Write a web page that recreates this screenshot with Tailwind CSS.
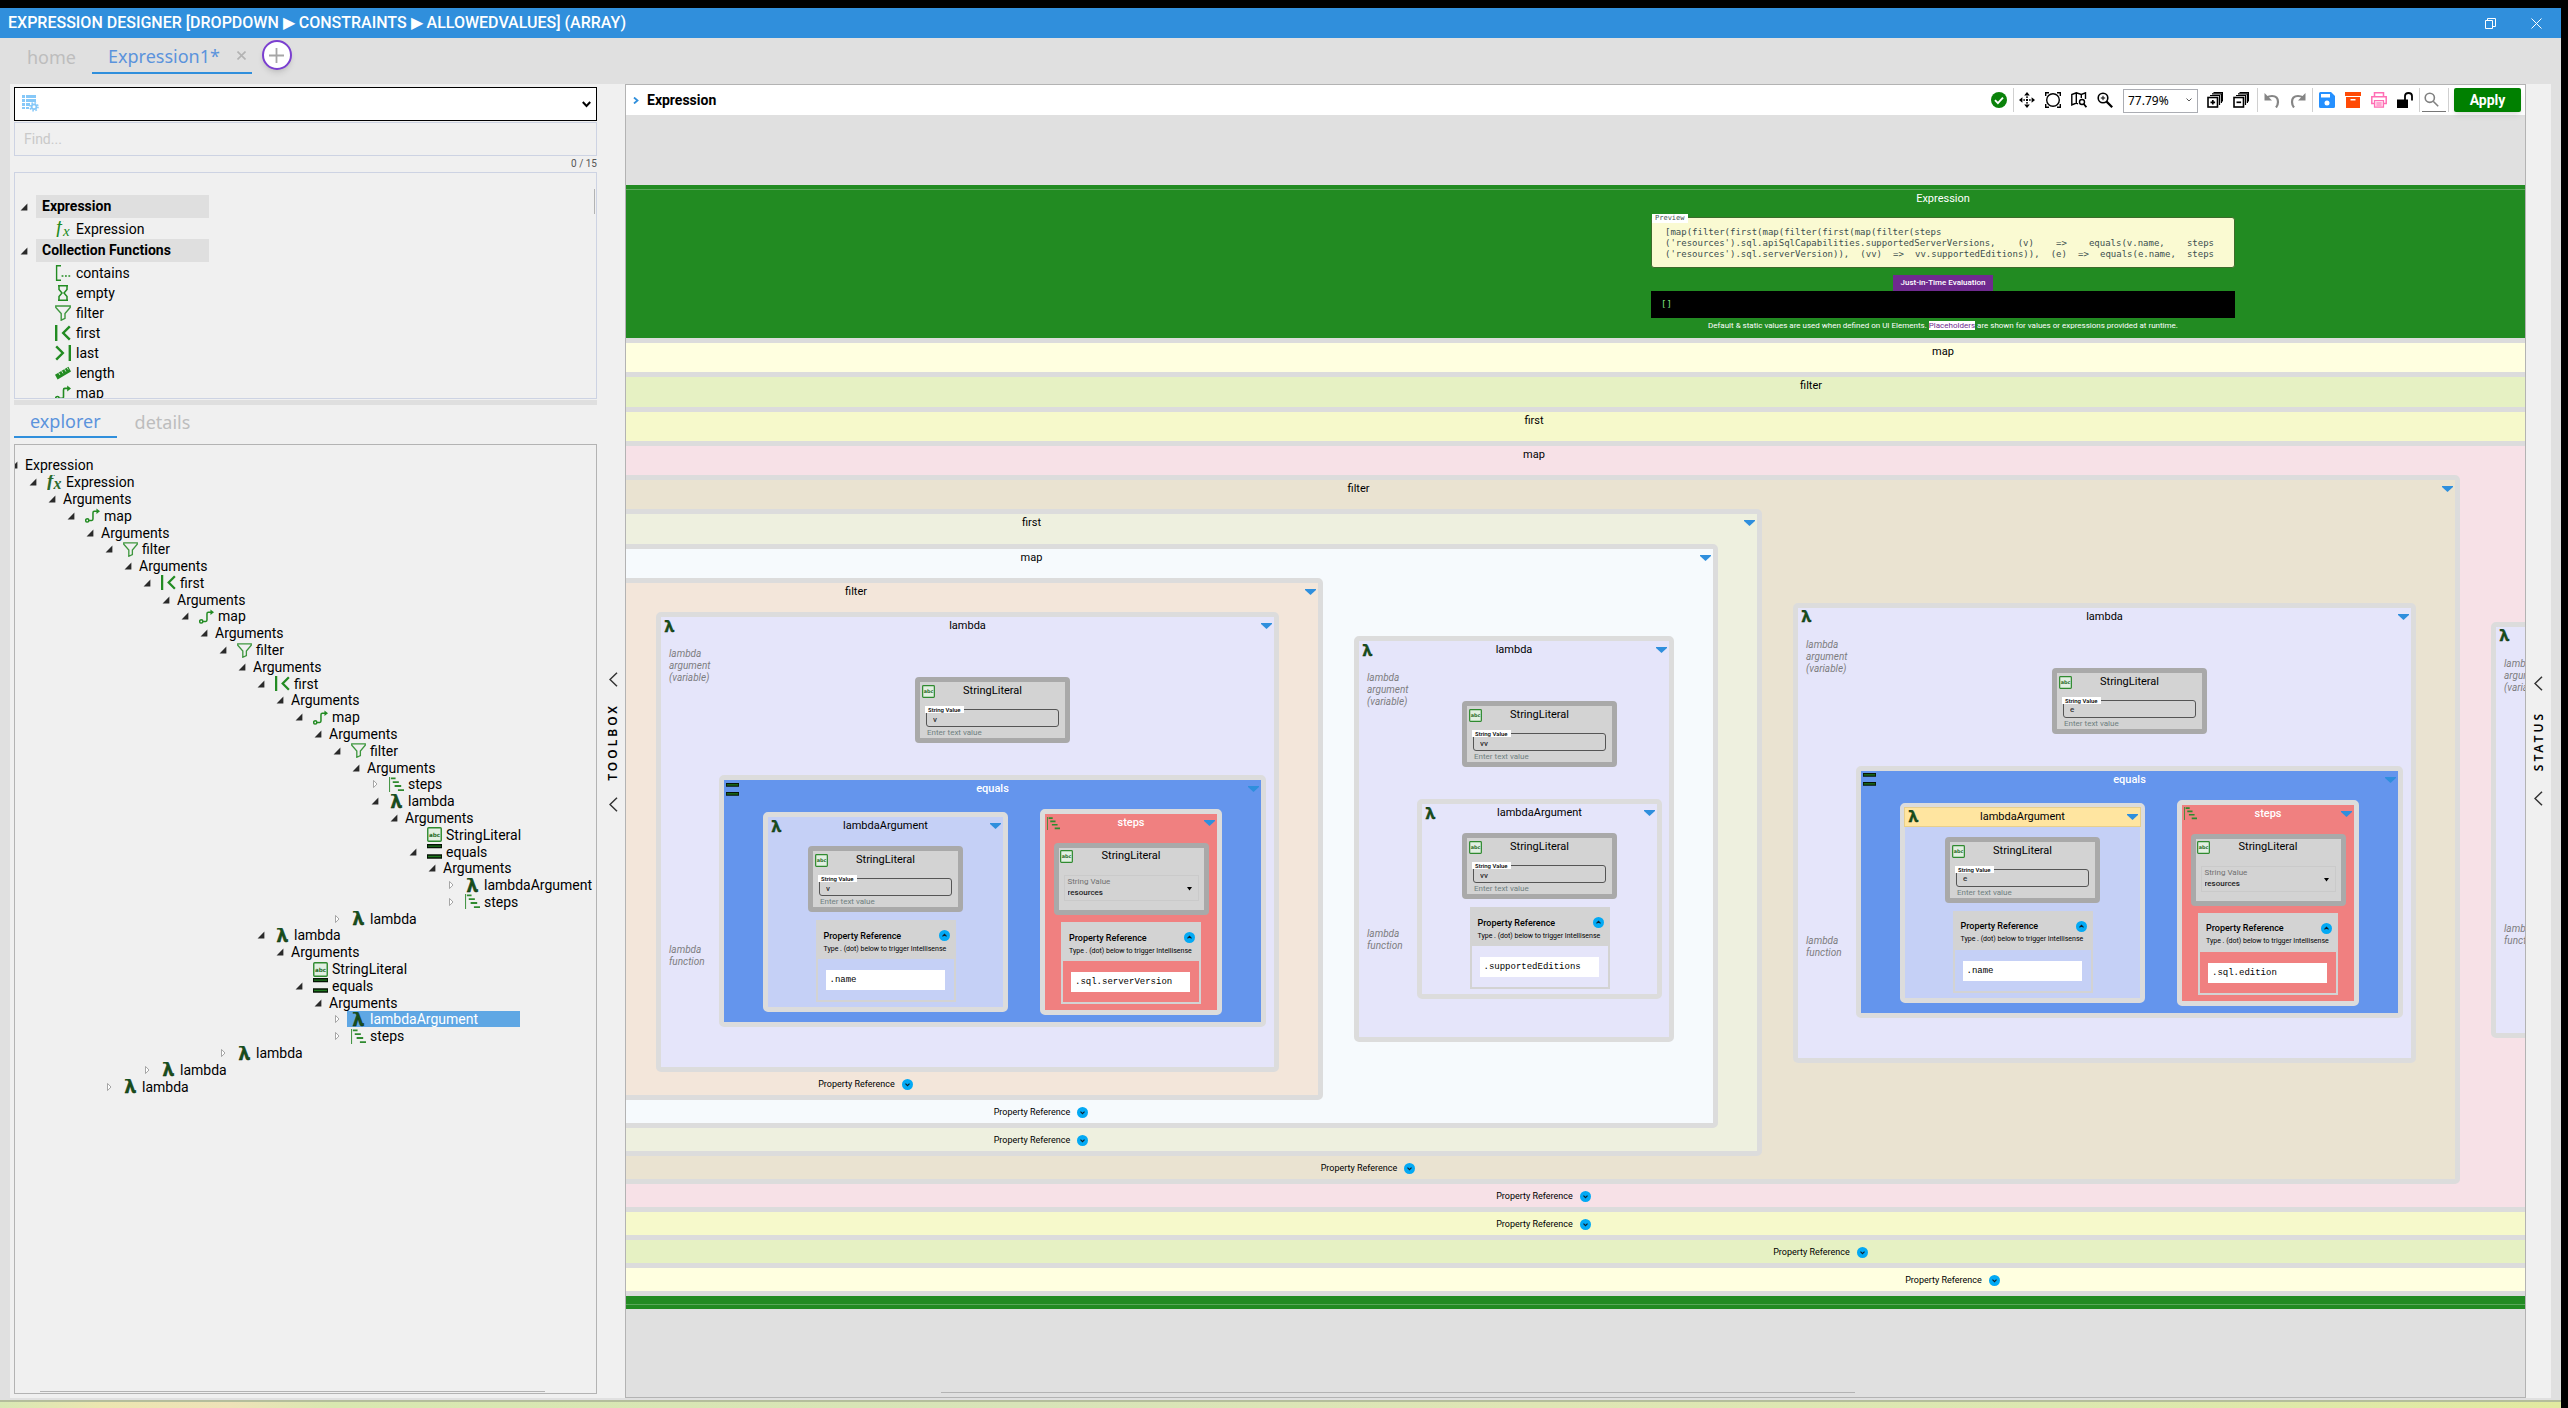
<!DOCTYPE html>
<html lang="en">
<head>
    <meta charset="UTF-8">
    <meta name="viewport" content="width=device-width, initial-scale=1.0">
    <title>Expression Designer</title>
    <script src="https://cdn.jsdelivr.net/npm/@tailwindcss/browser@4"></script>
</head>
<body class="h-screen overflow-hidden bg-black pt-2 pr-[7px] font-['Roboto',sans-serif] text-black">

    <!-- Icon sprite -->
    <svg class="hidden">
        <symbol id="i-lambda" viewBox="0 0 16 16"><text x="8" y="15" text-anchor="middle" font-family="Noto Sans" font-weight="bold" font-size="20" fill="#17521b" stroke="#0c260e" stroke-width=".5">λ</text></symbol>
        <symbol id="i-fx" viewBox="0 0 16 16"><text x="0" y="13" font-family="Liberation Serif" font-style="italic" font-weight="bold" font-size="20" fill="#2b6a2b">f</text><text x="7" y="15" font-family="Liberation Serif" font-style="italic" font-weight="bold" font-size="17" fill="#2b6a2b">x</text></symbol>
        <symbol id="i-fx-thin" viewBox="0 0 16 16"><text x="1" y="13" font-family="Liberation Serif" font-style="italic" font-size="20" fill="#228b22">f</text><text x="8" y="15" font-family="Liberation Serif" font-style="italic" font-size="15" fill="#228b22">x</text></symbol>
        <symbol id="i-map" viewBox="0 0 16 16" fill="none" stroke="#228b22" stroke-width="1.6"><circle cx="2.4" cy="13.2" r="1.7"/><path d="M4 13.2h3.2q1.3 0 1.3-1.4V5q0-1.6 1.4-1.6H13"/><path d="M12.2 .4 16 3.4 12.2 6.4z" fill="#228b22" stroke="none"/></symbol>
        <symbol id="i-filter" viewBox="0 0 16 16" fill="none" stroke="#3d963d" stroke-width="1.4"><path d="M.8 1h14.4v1.4L10 8.6v4.8L6.2 15.2V8.6L.8 2.4z"/></symbol>
        <symbol id="i-first" viewBox="0 0 16 16" fill="none" stroke="#228b22" stroke-width="2.4"><path d="M1.2 0v16M14.8 1.400 8.200 8l6.600 6.600"/></symbol>
        <symbol id="i-last" viewBox="0 0 16 16" fill="none" stroke="#228b22" stroke-width="2.4"><path d="M14.8 0v16M1.200 1.400 7.800 8l-6.600 6.600"/></symbol>
        <symbol id="i-steps" viewBox="0 0 16 16" fill="none" stroke="#2f8a2f"><path d="M.6 0v16" stroke-width="1"/><path d="M2 1.4h5M4 5.4h6.5M6 9.6h7M9.500 14h6.500" stroke-width="2"/></symbol>
        <symbol id="i-equals" viewBox="0 0 16 16"><path d="M0 0h16v4.600H0zM0 11h16v4.600H0z" fill="#071407"/><path d="M1 1.500h14v1.500H1zM1 12.500h14V14H1z" fill="#1f7a1f"/></symbol>
        <symbol id="i-abc" viewBox="0 0 16 16"><rect x=".8" y=".8" width="14.4" height="14.4" rx="1" fill="#e2efe2" stroke="#2f8a2f" stroke-width="1.5"/><text x="8" y="10.4" text-anchor="middle" font-family="DejaVu Sans" font-weight="bold" font-size="6" fill="#1f6a1f">abc</text></symbol>
        <symbol id="i-contains" viewBox="0 0 16 16" fill="none" stroke="#228b22"><path d="M6 .8H1.600v14.400H6" stroke-width="1.4"/><path d="M6.600 11h1.800M10 11h1.800M13.400 11h1.800" stroke-width="1.4"/></symbol>
        <symbol id="i-empty" viewBox="0 0 16 16" fill="none" stroke="#228b22" stroke-width="1.5"><path d="M3 .8h10M3 15.2h10M4 1v3.400L7 8l-3 3.600V15M12 1v3.400L9 8l3 3.600V15"/></symbol>
        <symbol id="i-length" viewBox="0 0 16 16"><path d="M0 9.800 13.400 1.800 16 6.600 2.600 14.400z" fill="#228b22"/><path d="m3.600 7.600 1.300 2.400M6.600 5.900l1.300 2.400M9.600 4.200l1.300 2.400M12.200 2.800l1 1.800" stroke="#f0f0f0" stroke-width=".8"/></symbol>
        <symbol id="i-open" viewBox="0 0 10 10"><path d="M8.400 1.600v6.800H1.600z" fill="#2a2a2a"/></symbol>
        <symbol id="i-closed" viewBox="0 0 10 10"><path d="M3.500 1.400 7 5 3.500 8.600z" fill="#fff" stroke="#a6a6a6"/></symbol>
        <symbol id="i-tri" viewBox="0 0 11 6"><path d="M0 0h11v1L5.500 6 0 1z" fill="#2f8fdd"/></symbol>
        <symbol id="i-chev-down" viewBox="0 0 12 12"><circle cx="6" cy="6" r="6" fill="#03a9f4"/><path d="m3.800 5 2.200 2.200L8.200 5" fill="none" stroke="#10202c" stroke-width="1.3"/></symbol>
        <symbol id="i-chev-up" viewBox="0 0 12 12"><circle cx="6" cy="6" r="6" fill="#03a9f4"/><path d="M3.800 7 6 4.800 8.200 7" fill="none" stroke="#10202c" stroke-width="1.3"/></symbol>
    </svg>

    <div class="flex h-full flex-col bg-[#e0e0e0]">
        <!-- Title bar -->
        <header class="flex h-[30px] shrink-0 items-center bg-[#308fdc] pr-0.5 pl-2 text-white">
            <h1 class="flex-1 text-base leading-5 font-medium">EXPRESSION DESIGNER [DROPDOWN ▶ CONSTRAINTS ▶ ALLOWEDVALUES] (ARRAY)</h1>
            <button class="grid w-[46px] place-items-center" aria-label="Restore"><svg class="size-[11px]" viewBox="0 0 11 11" fill="none" stroke="#fff"><path d="M.5 2.500h7v8h-7zM2.500 2.500v-2h8v8h-3"/></svg></button>
            <button class="grid w-[46px] place-items-center" aria-label="Close"><svg class="size-[11px]" viewBox="0 0 11 11" fill="none" stroke="#fff"><path d="m.5.5 10 10M10.500.5l-10 10"/></svg></button>
        </header>

        <!-- Document tabs -->
        <nav class="flex h-[46px] shrink-0 items-start pl-[11px] font-['Noto_Sans',sans-serif] text-lg">
            <button class="h-9 px-4 pt-0.5 text-[#bdbdbd]">home</button>
            <div class="flex h-9 items-center border-b-2 border-[#308fdc] pr-[5px] pl-4 text-[#5b93dc]">
                <button class="pt-0.5">Expression1*</button>
                <button class="ml-4 grid size-[11px] place-items-center" aria-label="Close tab"><svg class="size-[9px]" viewBox="0 0 9 9" stroke="#b3b3b3" stroke-width="1.600"><path d="m.5.5 8 8M8.500.5l-8 8"/></svg></button>
            </div>
            <button class="mt-0.5 ml-[10px] grid size-[30px] place-items-center rounded-full border-2 border-[#7b3fd0] bg-white shadow-md" aria-label="New tab"><svg class="size-[15px]" viewBox="0 0 15 15" stroke="#a6a6a6" stroke-width="1.800"><path d="M7.500 0v15M0 7.500h15"/></svg></button>
        </nav>

        <main class="mb-[2px] flex min-h-0 flex-1 px-[10px]">
            <!-- Toolbox -->
            <aside class="flex w-[615px] shrink-0 bg-[#f0f0f0] pl-1">
                <div class="flex w-[583px] flex-col pt-[3px] pb-1">
                    <div class="relative">
                        <select class="block h-[34px] w-full appearance-none border border-black bg-white" aria-label="Toolbox filter"><option></option></select>
                        <svg class="pointer-events-none absolute top-2 left-2 size-[17px]" viewBox="0 0 17 17"><path d="M0 0h3v3H0zM4 0h10v3H4zM0 4h3v3H0zM4 4h10v3H4zM0 8h3v3H0zM4 8h4v3H4zM0 12h3v2H0zM4 12h3v2H4z" fill="#86c8f8"/><circle cx="12" cy="11.800" r="2.400" fill="#fff" stroke="#86c8f8" stroke-width="1.800"/><circle cx="12" cy="11.800" r="4" fill="none" stroke="#86c8f8" stroke-width="1.600" stroke-dasharray="1.570 1.570"/></svg>
                        <svg class="pointer-events-none absolute top-3.5 right-1.5 h-[7px] w-[9px]" viewBox="0 0 9 7" fill="none" stroke="#000" stroke-width="2"><path d="m.8 1 3.700 4 3.700-4"/></svg>
                    </div>
                    <input type="text" placeholder="Find..." aria-label="Find" class="mt-px h-[34px] border border-[#cdd3e3] px-[9px] text-sm placeholder:text-[#c9c9c9]">
                    <p class="h-4 text-right text-[10px] leading-4 text-[#555]">0 / 15</p>
                    <div class="relative h-[227px] shrink-0 overflow-hidden border border-[#cdd3e3] pt-[22px] text-sm leading-5" id="toolbox"></div>
                    <div class="mt-px h-[5px] shrink-0 bg-[#dfdfdf]"></div>
                    <div class="flex h-[33px] shrink-0 gap-0.5 font-['Noto_Sans',sans-serif] text-lg leading-8">
                        <button class="border-b-2 border-[#308fdc] px-4 text-[#5b93dc]">explorer</button>
                        <button class="px-4 text-[#bdbdbd]">details</button>
                    </div>
                    <div class="relative mt-1.5 flex-1 overflow-hidden border border-[#b3b3b3] pt-3">
                        <ul class="grid h-[638px] auto-rows-fr text-sm leading-4" id="tree"></ul>
                        <div class="absolute bottom-px left-[25px] h-px w-[505px] bg-[#b3b3b3]"></div>
                    </div>
                </div>
                <div class="flex flex-1 flex-col items-center justify-center gap-4 pt-0.5 pl-1">
                    <svg class="h-[15px] w-[9px]" viewBox="0 0 9 15" fill="none" stroke="#333" stroke-width="1.500"><path d="M8 .8 1 7.500 8 14.200"/></svg>
                    <button class="rotate-180 font-['Noto_Sans',sans-serif] text-xs font-semibold tracking-[3px] [writing-mode:vertical-rl]">TOOLBOX</button>
                    <svg class="h-[15px] w-[9px]" viewBox="0 0 9 15" fill="none" stroke="#333" stroke-width="1.500"><path d="M8 .8 1 7.500 8 14.200"/></svg>
                </div>
            </aside>

            <!-- Design surface -->
            <section class="flex min-w-0 flex-1 flex-col border border-[#b3b3b3]">
                <div class="flex h-[30px] shrink-0 items-center bg-white pr-1">
                    <button class="flex flex-1 items-center gap-2 pl-[7px] text-left text-sm font-bold"><svg class="h-[7px] w-[6px]" viewBox="0 0 6 7" fill="none" stroke="#308fdc" stroke-width="1.800"><path d="m1 .5 3.500 3L1 6.500"/></svg>Expression</button>

                    <svg class="mr-1.5 size-4" viewBox="0 0 16 16"><circle cx="8" cy="8" r="8" fill="#0a820a"/><path d="m4 8.200 2.900 2.900L12 5.600" fill="none" stroke="#fff" stroke-width="1.900"/></svg>
                    <span class="h-6 w-px bg-[#d0d0d0]"></span>
                    <div class="flex gap-[10px] pr-2.5 pl-[5px]">
                        <button aria-label="Pan"><svg class="size-4" viewBox="0 0 16 16"><path d="m8 0 2.800 3.400H5.200zM8 16l2.800-3.400H5.200zM0 8l3.400-2.800v5.600zM16 8l-3.400-2.800v5.600z"/><path d="M7 7h2v2H7zM7 4.500h2v1.200H7zM7 10.300h2v1.200H7zM4.500 7h1.200v2H4.500zM10.300 7h1.200v2h-1.200z"/></svg></button>
                        <button aria-label="Fit"><svg class="size-4" viewBox="0 0 16 16" fill="none" stroke="#000" stroke-width="1.400"><circle cx="8" cy="8" r="6.300"/><path d="M.7 4V.7H4M12 .7h3.300V4M15.300 12v3.300H12M4 15.300H.7V12"/></svg></button>
                        <button aria-label="Overview"><svg class="size-4" viewBox="0 0 16 16" fill="none" stroke="#000" stroke-width="1.400"><path d="M7 11.800 5.300 11 .8 13V2.500L5.300.8l5 1.600L14.500.8V7M5.300.8V11M10.300 2.400V6"/><circle cx="11" cy="10" r="2.500"/><path d="m12.800 12 2.600 3.200" stroke-width="1.800"/></svg></button>
                        <button aria-label="Zoom"><svg class="size-4" viewBox="0 0 16 16" fill="none" stroke="#000" stroke-width="1.600"><circle cx="6" cy="6" r="4.800"/><path d="m9.600 9.600 5.600 5.600" stroke-width="2.200"/><path d="M6 3.800v4.400M3.800 6h4.400" stroke-width="1"/></svg></button>
                    </div>
                    <div class="relative mr-[9px]">
                        <select class="h-6 w-[75px] appearance-none border border-[#abadb3] pl-1 font-['Noto_Sans',sans-serif] text-xs" aria-label="Zoom level"><option>77.79%</option></select>
                        <svg class="pointer-events-none absolute top-2.5 right-1.5 h-1 w-1.5" viewBox="0 0 6 4" fill="none" stroke="#555"><path d="m.5.5 2.500 2.500L5.500.5"/></svg>
                    </div>
                    <div class="flex gap-[10px] pr-2">
                        <button aria-label="Expand all"><svg class="size-4" viewBox="0 0 16 16" fill="none" stroke="#000"><rect x="1" y="5.500" width="9.500" height="9.500" stroke-width="1.600"/><path d="M3 3.500h9.500V13M5 1.800h9.400V11M6.500.5H15.500V9.500" stroke-width="1.200"/><path d="M5.800 8v4.600M3.500 10.300h4.600" stroke-width="1.700"/></svg></button>
                        <button aria-label="Collapse all"><svg class="size-4" viewBox="0 0 16 16" fill="none" stroke="#000"><rect x="1" y="5.500" width="9.500" height="9.500" stroke-width="1.600"/><path d="M3 3.500h9.500V13M5 1.800h9.400V11M6.500.5H15.500V9.500" stroke-width="1.200"/><path d="M3.500 10.300h4.600" stroke-width="1.700"/></svg></button>
                    </div>
                    <span class="h-6 w-px bg-[#d0d0d0]"></span>
                    <div class="flex gap-[10px] px-1.5">
                        <button aria-label="Undo"><svg class="size-4" viewBox="0 0 16 16" fill="none" stroke="#858585" stroke-width="2.200"><path d="M3 5.500q2-1.500 5-1.500 6 0 6 6 0 3-2 5.500"/><path d="M.5 1v7.500H8z" fill="#858585" stroke="none"/></svg></button>
                        <button aria-label="Redo"><svg class="size-4" viewBox="0 0 16 16" fill="none" stroke="#858585" stroke-width="2.200"><path d="M13 5.500Q11 4 8 4q-6 0-6 6 0 3 2 5.500"/><path d="M15.500 1v7.500H8z" fill="#858585" stroke="none"/></svg></button>
                    </div>
                    <span class="h-6 w-px bg-[#d0d0d0]"></span>
                    <div class="flex gap-[10px] px-1.5">
                        <button aria-label="Save"><svg class="size-4" viewBox="0 0 16 16"><path d="M1.500 0H12l4 4v10.500a1.500 1.500 0 0 1-1.500 1.500h-13A1.500 1.500 0 0 1 0 14.500v-13A1.500 1.500 0 0 1 1.500 0z" fill="#2590ff"/><path d="M2 2h9v3.500H2z" fill="#fff"/><circle cx="8" cy="11" r="2.500" fill="#fff"/></svg></button>
                        <button aria-label="Archive"><svg class="size-4" viewBox="0 0 16 16" fill="#ff4a05"><path d="M0 0h16v4H0zM1 5h14v11H1z"/><path d="M5.500 7h5v1.500h-5z" fill="#fff"/></svg></button>
                        <button aria-label="Print"><svg class="size-4" viewBox="0 0 16 16" fill="none" stroke="#ff6eb4" stroke-width="1.500"><path d="M3.500 4.500V.8h9v3.700M3.500 11.500H.8V4.800h14.400v6.700h-2.700"/><path d="M3.500 8.500h9v6.700h-9zM5.500 11h5M5.500 13h5" fill="#ffd7ea" stroke-width="1.200"/></svg></button>
                        <button aria-label="Unlock"><svg class="size-4" viewBox="0 0 16 16"><path d="M0 7.500h11V16H0z"/><path d="M8 8V4q0-3 3.500-3T15 4v4.500" fill="none" stroke="#000" stroke-width="1.800"/></svg></button>
                    </div>
                    <span class="h-6 w-px bg-[#d0d0d0]"></span>
                    <button class="mx-0.5 h-6 w-6 border-b border-[#777] pl-0.5" aria-label="Search"><svg class="size-[15px]" viewBox="0 0 15 15" fill="none" stroke="#808080" stroke-width="1.600"><circle cx="5.800" cy="5.800" r="4.600"/><path d="m9.200 9.200 5 5"/></svg></button>
                    <span class="mr-[5px] h-6 w-px bg-[#d0d0d0]"></span>
                    <button class="h-6 w-[67px] rounded-[2px] bg-[#008000] text-sm font-bold text-white shadow-md">Apply</button>
                </div>

                <div class="relative min-h-0 flex-1 overflow-hidden pt-[70px]">
                    <div id="canvas" class="-ml-[589px] w-[3812px]"></div>
                    <div class="absolute bottom-1 left-[315px] h-px w-[914px] bg-[#b3b3b3]"></div>
                </div>
            </section>

            <!-- Status -->
            <aside class="flex w-[25px] shrink-0 flex-col items-center justify-center gap-5 bg-[#f0f0f0]">
                <svg class="h-[15px] w-[9px]" viewBox="0 0 9 15" fill="none" stroke="#333" stroke-width="1.500"><path d="M8 .8 1 7.500 8 14.200"/></svg>
                <button class="rotate-180 font-['Noto_Sans',sans-serif] text-xs font-semibold tracking-[3px] [writing-mode:vertical-rl]">STATUS</button>
                <svg class="h-[15px] w-[9px]" viewBox="0 0 9 15" fill="none" stroke="#333" stroke-width="1.500"><path d="M8 .8 1 7.500 8 14.200"/></svg>
            </aside>
        </main>

        <footer class="h-2 shrink-0 border-t-2 border-[#b4bd9c] bg-[linear-gradient(to_right,#d9e8b4,#ece6b0_4%,#eee2b8_9%,#d9e8b0_13%,#d8e4b8_40%,#dfe6b4_60%,#dce8b0_80%,#e2eaa0)]"></footer>
    </div>

    <script>
        const icon = (name, size) => `<svg class="${size} shrink-0 overflow-visible"><use href="#i-${name}"/></svg>`;

        // ---- Toolbox list ----
        const groups = [
            { name: 'Expression', items: [['fx-thin', 'Expression']] },
            { name: 'Collection Functions', items: [['contains', 'contains'], ['empty', 'empty'], ['filter', 'filter'], ['first', 'first'], ['last', 'last'], ['length', 'length'], ['map', 'map']] }
        ];
        document.getElementById('toolbox').innerHTML = groups.map(g => `
            <div class="flex items-center gap-[7px] pl-1">
                ${icon('open', 'size-[10px]')}
                <h3 class="h-[23px] w-[173px] bg-[#dfdfdf] pl-1.5 leading-[23px] font-bold">${g.name}</h3>
            </div>
            <ul class="pt-px">
                ${g.items.map(([ic, name]) => `<li class="flex h-5 items-center gap-[5px] pl-10">${icon(ic, 'size-4')}${name}</li>`).join('')}
            </ul>`).join('') + '<div class="absolute top-4 right-px h-[25px] w-px bg-[#b3b3b3]"></div>';

        // ---- Explorer tree: [depth, icon, label, state] ----
        const rows = [
            [0, '', 'Expression', 'open'], [1, 'fx', 'Expression', 'open'], [2, '', 'Arguments', 'open'],
            [3, 'map', 'map', 'open'], [4, '', 'Arguments', 'open'], [5, 'filter', 'filter', 'open'],
            [6, '', 'Arguments', 'open'], [7, 'first', 'first', 'open'], [8, '', 'Arguments', 'open'],
            [9, 'map', 'map', 'open'], [10, '', 'Arguments', 'open'], [11, 'filter', 'filter', 'open'],
            [12, '', 'Arguments', 'open'], [13, 'first', 'first', 'open'], [14, '', 'Arguments', 'open'],
            [15, 'map', 'map', 'open'], [16, '', 'Arguments', 'open'], [17, 'filter', 'filter', 'open'],
            [18, '', 'Arguments', 'open'], [19, 'steps', 'steps', 'closed'], [19, 'lambda', 'lambda', 'open'],
            [20, '', 'Arguments', 'open'], [21, 'abc', 'StringLiteral', ''], [21, 'equals', 'equals', 'open'],
            [22, '', 'Arguments', 'open'], [23, 'lambda', 'lambdaArgument', 'closed'], [23, 'steps', 'steps', 'closed'],
            [17, 'lambda', 'lambda', 'closed'], [13, 'lambda', 'lambda', 'open'], [14, '', 'Arguments', 'open'],
            [15, 'abc', 'StringLiteral', ''], [15, 'equals', 'equals', 'open'], [16, '', 'Arguments', 'open'],
            [17, 'lambda', 'lambdaArgument', 'closed', true], [17, 'steps', 'steps', 'closed'],
            [11, 'lambda', 'lambda', 'closed'], [7, 'lambda', 'lambda', 'closed'], [5, 'lambda', 'lambda', 'closed']
        ];
        document.getElementById('tree').innerHTML = rows.map(([depth, ic, label, state, selected]) => `
            <li class="flex items-center gap-[5px]" style="margin-left:${depth * 19 - 6}px">
                ${state ? icon(state, 'size-[10px]') : '<span class="w-[10px]"></span>'}
                <span class="flex items-center gap-1 ${ic ? 'pl-1' : 'pl-px'} ${selected ? 'w-[173px] bg-[#5fa7e4] text-white' : ''}">${ic ? icon(ic, 'size-[15px]') : ''}${label}</span>
            </li>`).join('');

        // ---- Diagram ----
        const toggle = '<button class="grid place-items-center" aria-label="Menu"><svg class="h-1.5 w-[11px]"><use href="#i-tri"/></svg></button>';

        function header(title, ic, extra) {
            return `
                <div class="grid shrink-0 grid-cols-[16px_1fr_16px] items-start text-center text-[11px] leading-[18px] ${extra}">
                    <span class="grid h-[18px] place-items-center">${ic ? icon(ic, 'size-[13px]') : ''}</span>
                    <span>${title}</span>
                    <span class="grid h-[18px] place-items-center">${toggle}</span>
                </div>`;
        }

        // Nested function frame: header, children side by side, collapsed property reference
        function frame(title, color, head, content) {
            return `
                <div class="flex flex-col rounded-[5px] border-[5px] border-[#dcdcdc] ${color}">
                    ${header(title, '', head)}
                    <div class="flex items-center gap-[31px] px-[39px]">${content}</div>
                    <div class="flex h-[23px] items-center justify-center gap-[7px] pt-0.5 pl-[19px] text-[9px]">Property Reference <button aria-label="Expand">${icon('chev-down', 'block size-[11px]')}</button></div>
                </div>`;
        }

        function stringLiteral(value) {
            return `
                <div class="h-[66px] w-[155px] shrink-0 rounded-[4px] border-[5px] border-[#a9a9a9] bg-[#d3d3d3] px-[6px]">
                    <div class="relative h-[27px] text-center text-[11px] leading-[18px]"><span class="absolute top-[3px] -left-1">${icon('abc', 'block size-[13px]')}</span>StringLiteral</div>
                    <div class="relative">
                        <label class="absolute -top-[3px] -left-px bg-white px-[3px] text-[6px] leading-[7px] font-medium">String Value</label>
                        <input type="text" value="${value}" aria-label="String Value" class="block h-[18px] w-full rounded-[3px] border border-[#555] px-1.5 pt-0.5 text-[8px] font-medium text-[#333]">
                    </div>
                    <p class="pl-px text-[8px] leading-[11px] text-[#6f8080]">Enter text value</p>
                </div>`;
        }

        function stringSelect(value) {
            return `
                <div class="h-[72px] w-[155px] shrink-0 rounded-[4px] border-[5px] border-[#a9a9a9] bg-[#d3d3d3] px-[5px]">
                    <div class="relative h-[27px] text-center text-[11px] leading-4"><span class="absolute top-0.5 -left-1">${icon('abc', 'block size-[13px]')}</span>StringLiteral</div>
                    <label class="relative block h-[26px] border border-[#cacaca] px-[3px] text-[8px] leading-[11px] text-[#707070]">String Value
                        <select class="block w-full appearance-none leading-[11px] font-medium text-[#222]"><option>${value}</option></select>
                        <svg class="absolute top-[11px] right-1.5 h-1 w-[5px]" viewBox="0 0 5 4"><path d="M0 0h5L2.500 3.500z"/></svg>
                    </label>
                </div>`;
        }

        function propertyReference(value) {
            return `
                <div class="h-[82px] w-[140px] shrink-0 border-2 border-[#d3d3d3]">
                    <div class="flex h-[37px] flex-col justify-center bg-[#d3d3d3] pt-0.5 pl-1.5 text-[7px] leading-3">
                        <p class="flex items-center justify-between pr-1 text-[9px] leading-[14px] font-medium">Property Reference <button aria-label="Collapse">${icon('chev-up', 'block size-[11px]')}</button></p>
                        <p class="whitespace-nowrap">Type . (dot) below to trigger Intellisense</p>
                    </div>
                    <input type="text" value="${value}" aria-label="Property path" class="mt-[11px] ml-2 block h-5 w-[119px] bg-white px-1 font-['Liberation_Mono',monospace] text-[9px]">
                </div>`;
        }

        function lambdaArgument(value, prop, color, head) {
            return `
                <div class="flex h-[200px] w-[245px] shrink-0 flex-col items-center rounded-[5px] border-[5px] border-[#dcdcdc] ${color}">
                    <div class="h-[29px] w-full">${header('lambdaArgument', 'lambda', head)}</div>
                    ${stringLiteral(value)}
                    <div class="h-2 shrink-0"></div>
                    ${propertyReference(prop)}
                </div>`;
        }

        function equals(value, argProp, stepsProp, head) {
            return `
                <div class="h-[252px] rounded-[5px] border-[5px] border-[#dcdcdc] bg-[#6495ed]">
                    ${header('<b class="font-medium text-white">equals</b>', 'equals', 'h-8')}
                    <div class="flex items-center gap-8 px-[39px]">
                        ${lambdaArgument(value, argProp, 'bg-[#c5d0f6]', head)}
                        <div class="-my-[3px] flex h-[206px] w-[182px] shrink-0 flex-col items-center rounded-[5px] border-[5px] border-[#dcdcdc] bg-[#f08080]">
                            <div class="w-full">${header('<b class="font-medium text-white">steps</b>', 'steps', 'h-[29px]')}</div>
                            ${stringSelect('resources')}
                            <div class="h-[7px] shrink-0"></div>
                            ${propertyReference(stepsProp)}
                        </div>
                    </div>
                </div>`;
        }

        function lambda(value, size, gap, fn) {
            return `
                <div class="${size} shrink-0 rounded-[5px] border-[5px] border-[#dcdcdc] bg-[#e5e5fa]">
                    ${header('lambda', 'lambda', 'h-[30px]')}
                    <div class="flex pr-2">
                        <div class="w-[58px] shrink-0 pt-px pl-2 text-[10px] leading-3 text-[#7d7d80] italic">
                            <p class="${gap}">lambda<br>argument<br>(variable)</p>
                            <p>lambda<br>function</p>
                        </div>
                        <div class="flex flex-1 flex-col items-center pt-[30px]">
                            ${stringLiteral(value)}
                            <div class="mt-8">${fn}</div>
                        </div>
                    </div>
                </div>`;
        }

        const lambdaV = lambda('v', 'h-[460px] w-[623px]', 'mb-[260px]', equals('v', '.name', '.sql.serverVersion', ''));
        const lambdaVV = lambda('vv', 'h-[406px] w-[320px]', 'mb-[220px]', lambdaArgument('vv', '.supportedEditions', 'bg-[#e5e5fa]', ''));
        const lambdaE = lambda('e', 'h-[460px] w-[623px]', 'mb-[260px]', equals('e', '.name', '.sql.edition', 'bg-[#ffe5a0] outline outline-[#e8cf8c]'));
        const lambdaEE = lambda('ee', 'h-[416px] w-[320px]', 'mb-[229px]', lambdaArgument('ee', '.value', 'bg-[#e5e5fa]', ''));

        let nested = frame('filter', 'w-[934px] shrink-0 bg-[#f3e6da]', 'h-[29px]', `<div class="flex w-full justify-end">${lambdaV}</div>`);
        nested = frame('map', 'shrink-0 bg-[#f6fafd]', 'h-[29px]', nested + lambdaVV);
        nested = frame('first', 'shrink-0 bg-[#eef0df]', 'h-[30px]', nested);
        nested = frame('filter', 'shrink-0 bg-[#eae3d1]', 'h-[29px]', nested + lambdaE);
        nested = frame('map', 'shrink-0 bg-[#f7e1e7]', 'h-[29px]', nested + lambdaEE);
        nested = frame('first', 'shrink-0 bg-[#f6f9cb]', 'h-[29px]', nested);
        nested = frame('filter', 'w-[3372px] shrink-0 bg-[#e6f1c3]', 'h-[30px]', nested);
        nested = frame('map', 'bg-[#ffffe0]', 'h-[29px]', nested);

        document.getElementById('canvas').innerHTML = `
            <div class="bg-[#228b22] p-1">
                <div class="border-y border-[#5aa85a] px-10 pb-2">
                    <div class="mx-auto flex w-[584px] flex-col items-center pb-1 text-[8px] text-white">
                        <h2 class="text-[11px] leading-[18px]">Expression</h2>
                        <div class="relative mt-[9px] h-[51px] w-full rounded-[3px] border border-[#3d6b2c] bg-[#fafad2] px-[13px] pt-[9px] font-['DejaVu_Sans_Mono',monospace] text-[9px] leading-[11px] text-[#3c4f4f]">
                            <span class="absolute -top-1 left-0 bg-white px-[3px] text-[7px] leading-[9px]">Preview</span>
                            <div class="h-8 overflow-hidden pr-[7px]">
                                <p>[map(filter(first(map(filter(first(map(filter(steps</p>
                                <p class="flex justify-between"><span>('resources').sql.apiSqlCapabilities.supportedServerVersions,</span><span>(v)</span><span>=&gt;</span><span>equals(v.name,</span><span>steps</span></p>
                                <p class="flex justify-between"><span>('resources').sql.serverVersion)),</span><span>(vv)</span><span>=&gt;</span><span>vv.supportedEditions)),</span><span>(e)</span><span>=&gt;</span><span>equals(e.name,</span><span>steps</span></p>
                            </div>
                        </div>
                        <span class="mt-[7px] bg-[#6f2a8f] px-2 leading-4 font-medium">Just-in-Time Evaluation</span>
                        <pre class="h-[27px] w-full bg-black px-2.5 font-['DejaVu_Sans_Mono',monospace] text-[9px] leading-[26px] text-[#7fe07f]">[]</pre>
                        <p class="leading-4">Default &amp; static values are used when defined on UI Elements. <span class="bg-white text-[#6f2a8f]">Placeholders</span> are shown for values or expressions provided at runtime.</p>
                    </div>
                    ${nested}
                </div>
            </div>`;
    </script>
</body>
</html>
